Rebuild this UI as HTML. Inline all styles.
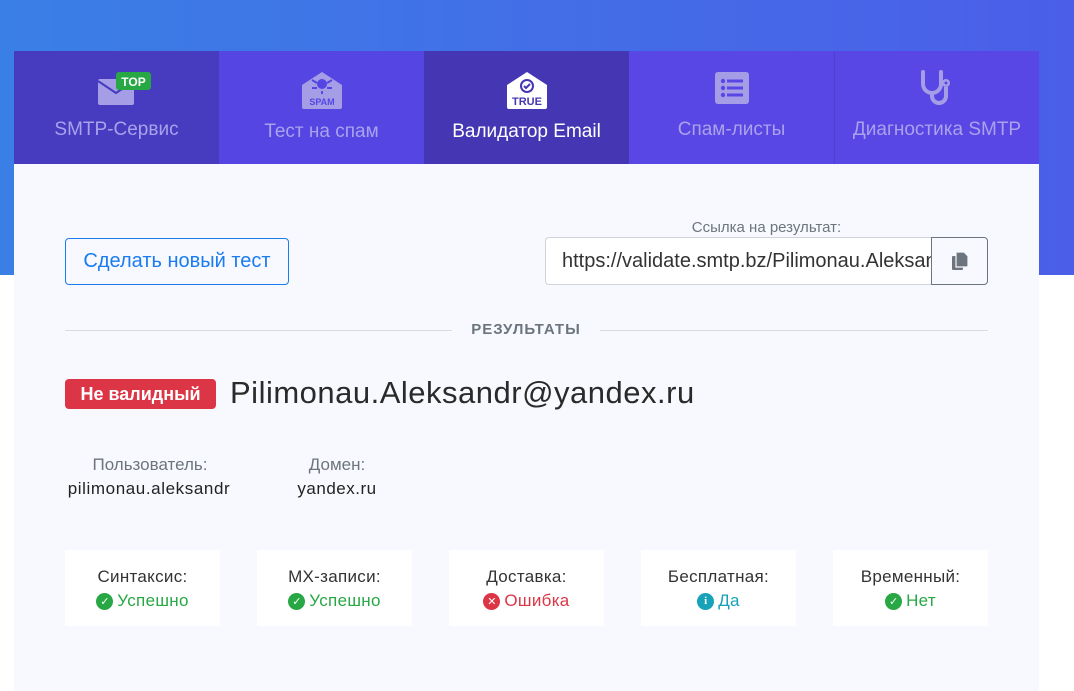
<!DOCTYPE html>
<html><head><meta charset="utf-8"><style>
*{margin:0;padding:0;box-sizing:border-box}
body{width:1074px;height:671px;overflow:hidden;background:#fff;font-family:"Liberation Sans","DejaVu Sans",sans-serif;position:relative}
.hero{position:absolute;left:0;top:0;width:1074px;height:275px;background:linear-gradient(90deg,#3a7fe6,#4b5ee8)}
.card{position:absolute;left:14px;top:51px;width:1025px;height:640px;background:#f8f9fe}
.tab{position:absolute;top:0;height:113px;width:205px;text-align:center;color:#a9a2ec;font-size:19px}
.tab .lbl{position:absolute;left:0;right:0;top:68px}
.tab svg{position:absolute;left:50%;transform:translateX(-50%);top:20px}
.abs{position:absolute}
.box{position:absolute;top:499px;width:155px;height:76px;background:#fff;text-align:center;font-size:17px;color:#333;letter-spacing:0.3px}
.box .t{margin-top:17px}
.box .v{margin-top:4px;display:flex;align-items:center;justify-content:center;gap:4px}
.ic{width:17px;height:17px;border-radius:50%;display:inline-flex;align-items:center;justify-content:center;color:#fff;font-size:11px;font-weight:bold;letter-spacing:0}
</style></head><body>
<div class="hero"></div>
<div class="card">
 <div class="tab" style="left:0;background:#473bbf">
  <svg width="60" height="40" viewBox="0 0 60 40" style="margin-left:8px"><rect x="3" y="8" width="36" height="26" rx="2" fill="#a59ee6"/><path d="M3 10 L21 22 L39 10" stroke="#473bbf" stroke-width="2" fill="none"/><rect x="21" y="1" width="35" height="18" rx="3" fill="#28a745"/><text x="38.5" y="15" font-size="12" font-weight="bold" fill="#fff" text-anchor="middle" font-family="Liberation Sans">TOP</text></svg>
  <div class="lbl" style="top:68px">SMTP-Сервис</div>
 </div>
 <div class="tab" style="left:205px;background:#5546e3">
  <svg width="44" height="40" viewBox="0 0 44 40"><path d="M2 14 L22 1 L42 14 V36 a2 2 0 0 1-2 2 H4 a2 2 0 0 1-2-2 Z" fill="#a59ee6"/><circle cx="22" cy="13" r="5" fill="#5546e3"/><path d="M12 9l5 3M32 9l-5 3M12 17h5M32 17h-5M22 20v3" stroke="#5546e3" stroke-width="2"/><text x="22" y="34" font-size="9" font-weight="bold" fill="#5546e3" text-anchor="middle" font-family="Liberation Sans">SPAM</text></svg>
  <div class="lbl" style="top:70px">Тест на спам</div>
 </div>
 <div class="tab" style="left:410px;background:#4536b4;color:#fff">
  <svg width="44" height="40" viewBox="0 0 44 40"><path d="M2 14 L22 1 L42 14 V36 a2 2 0 0 1-2 2 H4 a2 2 0 0 1-2-2 Z" fill="#fff"/><circle cx="22" cy="15" r="6" fill="none" stroke="#4536b4" stroke-width="2"/><path d="M19 15l2 2 4-4" stroke="#4536b4" stroke-width="2" fill="none"/><text x="22" y="34" font-size="11" font-weight="bold" fill="#4536b4" text-anchor="middle" font-family="Liberation Sans">TRUE</text></svg>
  <div class="lbl" style="top:70px">Валидатор Email</div>
 </div>
 <div class="tab" style="left:615px;background:#5847e4">
  <svg width="36" height="34" viewBox="0 0 36 34" style="top:20px"><rect x="1" y="1" width="34" height="32" rx="3" fill="#a59ee6"/><circle cx="9" cy="10" r="2.2" fill="#5847e4"/><circle cx="9" cy="17" r="2.2" fill="#5847e4"/><circle cx="9" cy="24" r="2.2" fill="#5847e4"/><rect x="13" y="8.5" width="16" height="3" fill="#5847e4"/><rect x="13" y="15.5" width="16" height="3" fill="#5847e4"/><rect x="13" y="22.5" width="16" height="3" fill="#5847e4"/></svg>
  <div class="lbl" style="top:68px">Спам-листы</div>
 </div>
 <div class="tab" style="left:820px;background:#5847e4;border-left:1px solid #4e3fd0">
  <svg width="40" height="40" viewBox="0 0 40 40" style="top:17px"><path d="M6 4v12a9 9 0 0 0 18 0V4" stroke="#a59ee6" stroke-width="4" fill="none" stroke-linecap="round"/><path d="M15 25v3a7 7 0 0 0 14 0v-9" stroke="#a59ee6" stroke-width="4" fill="none"/><circle cx="29" cy="15" r="4" fill="#a59ee6"/><circle cx="29" cy="15" r="1.5" fill="#5847e4"/></svg>
  <div class="lbl" style="top:68px">Диагностика SMTP</div>
 </div>

 <div class="abs" style="left:51px;top:187px;width:224px;height:47px;border:1px solid #1a7cf0;border-radius:4px;color:#1a7cf0;font-size:20px;text-align:center;line-height:45px">Сделать новый тест</div>
 <div class="abs" style="left:531px;top:168px;width:443px;text-align:center;font-size:15px;color:#6c757d">Ссылка на результат:</div>
 <div class="abs" style="left:531px;top:186px;width:387px;height:48px;border:1px solid #ced4da;border-right:none;border-radius:4px 0 0 4px;background:#fff;font-size:20px;color:#333;line-height:46px;padding-left:16px;overflow:hidden;white-space:nowrap">https://validate.smtp.bz/Pilimonau.Aleksandr@yandex.ru</div>
 <div class="abs" style="left:917px;top:186px;width:57px;height:48px;border:1px solid #6c757d;border-radius:0 4px 4px 0">
  <svg width="20" height="20" viewBox="0 0 20 20" style="position:absolute;left:18px;top:13px"><rect x="2" y="5" width="11" height="14" rx="1" fill="#6c757d"/><path d="M6 1h8l4 4v10a1 1 0 0 1-1 1H6z" fill="#6c757d" stroke="#f8f9fe" stroke-width="1.2"/></svg>
 </div>

 <div class="abs" style="left:51px;top:279px;width:387px;height:1px;background:#d8dbe0"></div>
 <div class="abs" style="left:586px;top:279px;width:388px;height:1px;background:#d8dbe0"></div>
 <div class="abs" style="left:438px;top:270px;width:148px;text-align:center;font-size:15px;font-weight:bold;color:#6c757d;letter-spacing:1px">РЕЗУЛЬТАТЫ</div>

 <div class="abs" style="left:51px;top:328px;width:151px;height:30px;background:#dc3545;border-radius:4px;color:#fff;font-weight:bold;font-size:18px;line-height:30px;text-align:center">Не валидный</div>
 <div class="abs" style="left:216px;top:324px;font-size:31px;color:#2a2a2a;letter-spacing:0.5px">Pilimonau.Aleksandr@yandex.ru</div>

 <div class="abs" style="left:41px;top:404px;width:190px;text-align:center;font-size:17px;color:#6c757d">Пользователь:</div>
 <div class="abs" style="left:35px;top:428px;width:200px;text-align:center;font-size:17px;color:#222;letter-spacing:0.6px">pilimonau.aleksandr</div>
 <div class="abs" style="left:273px;top:404px;width:100px;text-align:center;font-size:17px;color:#6c757d">Домен:</div>
 <div class="abs" style="left:273px;top:428px;width:100px;text-align:center;font-size:17px;color:#222;letter-spacing:0.5px">yandex.ru</div>

 <div class="box" style="left:51px"><div class="t">Синтаксис:</div><div class="v" style="color:#28a745"><span class="ic" style="background:#28a745">✓</span>Успешно</div></div>
 <div class="box" style="left:243px"><div class="t">MX-записи:</div><div class="v" style="color:#28a745"><span class="ic" style="background:#28a745">✓</span>Успешно</div></div>
 <div class="box" style="left:435px"><div class="t">Доставка:</div><div class="v" style="color:#dc3545"><span class="ic" style="background:#dc3545">✕</span>Ошибка</div></div>
 <div class="box" style="left:627px"><div class="t">Бесплатная:</div><div class="v" style="color:#17a2b8"><span class="ic" style="background:#17a2b8;font-family:'Liberation Serif',serif">i</span>Да</div></div>
 <div class="box" style="left:819px"><div class="t">Временный:</div><div class="v" style="color:#28a745"><span class="ic" style="background:#28a745">✓</span>Нет</div></div>
</div>
</body></html>
